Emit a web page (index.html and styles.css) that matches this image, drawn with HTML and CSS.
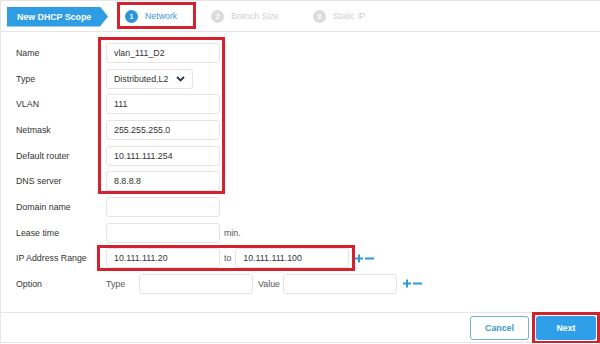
FILE: index.html
```html
<!DOCTYPE html>
<html lang="en">
<head>
    <meta charset="UTF-8">
    <meta name="viewport" content="width=device-width, initial-scale=1.0">
    <title>New DHCP Scope</title>
    <link rel="stylesheet" href="styles.css">
</head>
<body>
    <div class="page">
        <div class="header">
            <div class="scope-tag">New DHCP Scope</div>
            <div class="steps">
                <div class="step active marked">
                    <span class="step-num">1</span>
                    <span class="step-text">Network</span>
                </div>
                <div class="step">
                    <span class="step-num">2</span>
                    <span class="step-text">Branch Size</span>
                </div>
                <div class="step">
                    <span class="step-num">3</span>
                    <span class="step-text">Static IP</span>
                </div>
            </div>
        </div>

        <div class="form">
            <label class="label">Name</label>
            <div class="field"><input class="text-input" type="text" value="vlan_111_D2"></div>

            <label class="label">Type</label>
            <div class="field">
                <div class="select">
                    <span>Distributed,L2</span>
                    <svg class="chevron" width="9" height="6" viewBox="0 0 9 6"><path d="M1 1l3.5 3.5L8 1" fill="none" stroke="#243352" stroke-width="1.8"/></svg>
                </div>
            </div>

            <label class="label">VLAN</label>
            <div class="field"><input class="text-input" type="text" value="111"></div>

            <label class="label">Netmask</label>
            <div class="field"><input class="text-input" type="text" value="255.255.255.0"></div>

            <label class="label">Default router</label>
            <div class="field"><input class="text-input" type="text" value="10.111.111.254"></div>

            <label class="label">DNS server</label>
            <div class="field"><input class="text-input" type="text" value="8.8.8.8"></div>

            <label class="label">Domain name</label>
            <div class="field"><input class="text-input" type="text" value=""></div>

            <label class="label">Lease time</label>
            <div class="field">
                <input class="text-input" type="text" value="">
                <span class="unit">min.</span>
            </div>

            <label class="label">IP Address Range</label>
            <div class="field">
                <input class="text-input" type="text" value="10.111.111.20">
                <span class="unit">to</span>
                <input class="text-input" type="text" value="10.111.111.100">
                <span class="plus-minus">
                    <svg width="20" height="9" viewBox="0 0 20 9"><path d="M4 0.5v8M0 4.5h8M10 4.5h9" stroke="#2b9ad8" stroke-width="2"/></svg>
                </span>
            </div>

            <label class="label">Option</label>
            <div class="field">
                <span class="sub-label">Type</span>
                <input class="text-input" type="text" value="">
                <span class="sub-label value-label">Value</span>
                <input class="text-input" type="text" value="">
                <span class="plus-minus">
                    <svg width="20" height="9" viewBox="0 0 20 9"><path d="M4 0.5v8M0 4.5h8M10 4.5h9" stroke="#2b9ad8" stroke-width="2"/></svg>
                </span>
            </div>

            <div class="mark-box network-box"></div>
            <div class="mark-box range-box"></div>
        </div>

        <div class="footer">
            <button class="btn btn-cancel">Cancel</button>
            <button class="btn btn-next marked">Next</button>
        </div>
    </div>
</body>
</html>
```

FILE: styles.css
```css
body {
    margin: 0;
    font-family: "Liberation Sans", Arial, sans-serif;
    font-size: 8.8px;
    color: #333;
    background-color: #ffffff;
}

.page {
    width: 600px;
    height: 343px;
    border-left: 1px solid #e6e6e6;
    box-sizing: border-box;
    display: flex;
    flex-direction: column;
}

/* header with wizard steps */
.header {
    height: 32px;
    border-top: 1px solid #e6e6e6;
    border-bottom: 1px solid #e6e6e6;
    box-sizing: border-box;
    display: flex;
    align-items: center;
}

.scope-tag {
    margin-left: 6px;
    margin-top: 1px;
    width: 101px;
    height: 20px;
    box-sizing: border-box;
    padding-left: 10px;
    line-height: 20px;
    background-color: #2e9de4;
    color: #ffffff;
    font-weight: bold;
    clip-path: polygon(0 0, 93px 0, 101px 50%, 93px 100%, 0 100%);
}

.steps {
    display: flex;
    gap: 34px;
    margin-left: 17px;
}

.step {
    display: flex;
    align-items: center;
    gap: 7px;
    color: #cfcfcf;
}

.step-num {
    width: 13px;
    height: 13px;
    border-radius: 50%;
    background-color: #dcdcdc;
    color: #ffffff;
    font-size: 7px;
    font-weight: bold;
    display: flex;
    justify-content: center;
    align-items: center;
}

.step.active {
    color: #3a9ad6;
}

.step.active .step-num {
    background-color: #2a96dc;
}

.marked {
    position: relative;
}

.step.marked::after {
    content: "";
    position: absolute;
    left: -8px;
    right: -19px;
    top: -8px;
    bottom: -6px;
    border: 3px solid #d3212d;
}

/* form */
.form {
    flex: 1;
    position: relative;
    display: grid;
    grid-template-columns: 90px 1fr;
    grid-auto-rows: 20px;
    row-gap: 5.67px;
    padding: 11px 0 0 15px;
    align-content: start;
}

.label {
    display: flex;
    align-items: center;
    color: #333;
}

.field {
    display: flex;
    align-items: center;
}

.text-input {
    width: 114px;
    height: 20px;
    box-sizing: border-box;
    border: 1px solid #e4e4e4;
    border-radius: 3px;
    padding: 0 7px;
    font-family: inherit;
    font-size: 8.8px;
    color: #333;
    outline: none;
}

.select {
    width: 87px;
    height: 20px;
    box-sizing: border-box;
    border: 1px solid #e4e4e4;
    border-radius: 3px;
    padding: 0 7px;
    display: flex;
    align-items: center;
    justify-content: space-between;
}

.chevron {
    margin-top: 1px;
}

.unit {
    margin: 0 4px;
    color: #555;
}

.sub-label {
    color: #555;
    margin-right: 14px;
}

.value-label {
    margin-left: 5px;
    margin-right: 3px;
}

.plus-minus {
    display: flex;
    margin-left: 6px;
}

.mark-box {
    position: absolute;
    border: 3px solid #d3212d;
    pointer-events: none;
}

.network-box {
    left: 97px;
    top: 5px;
    width: 127px;
    height: 157px;
    box-sizing: border-box;
}

.range-box {
    left: 96px;
    top: 213px;
    width: 258px;
    height: 26px;
    box-sizing: border-box;
}

/* footer buttons */
.footer {
    height: 31px;
    border-top: 1px solid #e6e6e6;
    border-bottom: 1px solid #e6e6e6;
    box-sizing: border-box;
    display: flex;
    justify-content: flex-end;
    align-items: center;
    gap: 7px;
    padding-right: 4px;
}

.btn {
    height: 24px;
    border-radius: 3px;
    font-family: inherit;
    font-size: 8.8px;
    font-weight: bold;
    cursor: pointer;
}

.btn-cancel {
    width: 59px;
    background-color: #ffffff;
    border: 1px solid #6fb4cc;
    color: #3a97cf;
}

.btn-next {
    width: 60px;
    background-color: #2f9fea;
    border: none;
    color: #ffffff;
}

.btn-next::after {
    content: "";
    position: absolute;
    inset: -4px;
    border: 3px solid #d3212d;
}
```
